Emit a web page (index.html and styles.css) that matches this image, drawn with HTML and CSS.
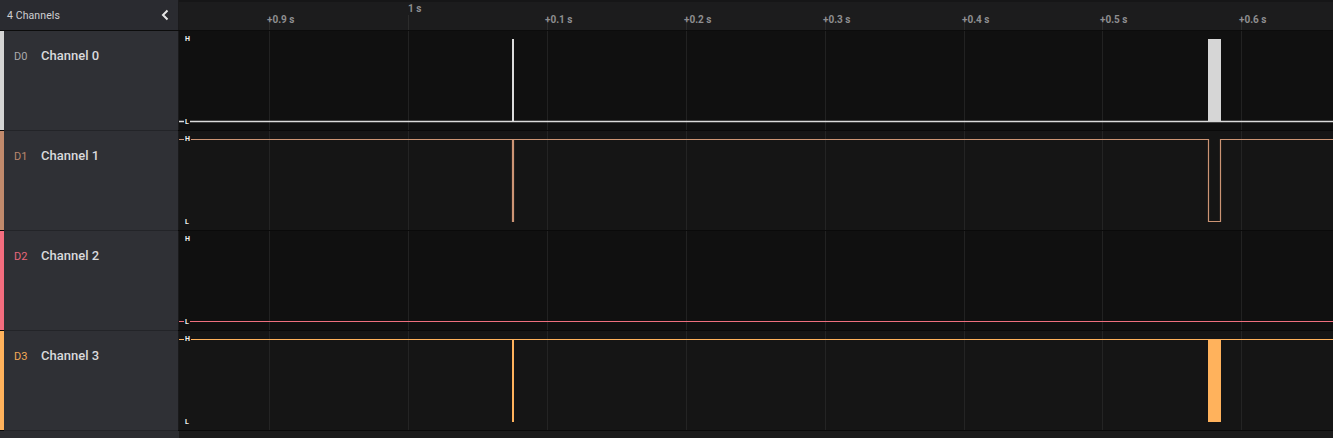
FILE: index.html
```html
<!DOCTYPE html>
<html>
<head>
<meta charset="utf-8">
<link rel="stylesheet" href="styles.css">
</head>
<body>
<div class="app">
  <div class="header">
    <div class="hdr-left">
      <span class="hdr-title">4 Channels</span>
      <svg class="chev" width="8" height="12" viewBox="0 0 8 12"><polyline points="6.5,1.5 2,6 6.5,10.5" fill="none" stroke="#e6e6e6" stroke-width="2"/></svg>
    </div>
    <div class="ruler">
      <svg class="ruler-svg" width="1154" height="30" viewBox="0 0 1154 30">
        <g stroke="#2c2c2c" stroke-width="1">
          <line x1="90.5" y1="16" x2="90.5" y2="30"/>
          <line x1="229.5" y1="15" x2="229.5" y2="30"/>
          <line x1="368.5" y1="16" x2="368.5" y2="30"/>
          <line x1="507.5" y1="16" x2="507.5" y2="30"/>
          <line x1="646.5" y1="16" x2="646.5" y2="30"/>
          <line x1="785.5" y1="16" x2="785.5" y2="30"/>
          <line x1="923.5" y1="16" x2="923.5" y2="30"/>
          <line x1="1062.5" y1="16" x2="1062.5" y2="30"/>
        </g>
      </svg>
      <span class="tick" style="left:88px">+0.9 s</span>
      <span class="tick major" style="left:229px">1 s</span>
      <span class="tick" style="left:366px">+0.1 s</span>
      <span class="tick" style="left:505px">+0.2 s</span>
      <span class="tick" style="left:644px">+0.3 s</span>
      <span class="tick" style="left:783px">+0.4 s</span>
      <span class="tick" style="left:921px">+0.5 s</span>
      <span class="tick" style="left:1060px">+0.6 s</span>
    </div>
  </div>

  <div class="row">
    <div class="chan c0"><span class="dn">D0</span><span class="cn">Channel 0</span></div>
    <div class="plot dark">
      <svg width="1154" height="99" viewBox="0 0 1154 99">
        <g stroke="#222" stroke-width="1">
          <line x1="90.5" y1="0" x2="90.5" y2="99"/><line x1="229.5" y1="0" x2="229.5" y2="99"/><line x1="368.5" y1="0" x2="368.5" y2="99"/><line x1="507.5" y1="0" x2="507.5" y2="99"/><line x1="646.5" y1="0" x2="646.5" y2="99"/><line x1="785.5" y1="0" x2="785.5" y2="99"/><line x1="923.5" y1="0" x2="923.5" y2="99"/><line x1="1062.5" y1="0" x2="1062.5" y2="99"/>
        </g>
        <line x1="0" y1="90.5" x2="1154" y2="90.5" stroke="#dcdcdc" stroke-width="1.5"/>
        <rect x="333" y="8" width="2" height="83" fill="#dcdcdc"/>
        <rect x="1029" y="8" width="13" height="83" fill="#d6d6d6"/>
      </svg>
      <span class="lvl lh">H</span><span class="lvl ll">L</span>
    </div>
  </div>

  <div class="row">
    <div class="chan c1"><span class="dn">D1</span><span class="cn">Channel 1</span></div>
    <div class="plot light">
      <svg width="1154" height="99" viewBox="0 0 1154 99">
        <g stroke="#242424" stroke-width="1">
          <line x1="90.5" y1="0" x2="90.5" y2="99"/><line x1="229.5" y1="0" x2="229.5" y2="99"/><line x1="368.5" y1="0" x2="368.5" y2="99"/><line x1="507.5" y1="0" x2="507.5" y2="99"/><line x1="646.5" y1="0" x2="646.5" y2="99"/><line x1="785.5" y1="0" x2="785.5" y2="99"/><line x1="923.5" y1="0" x2="923.5" y2="99"/><line x1="1062.5" y1="0" x2="1062.5" y2="99"/>
        </g>
        <path d="M0 8.5 H333.5 V90.5 H334.5 V8.5 H1029.5 V90.5 H1041.5 V8.5 H1154" fill="none" stroke="#cc9474" stroke-width="1.2"/>
      </svg>
      <span class="lvl lh">H</span><span class="lvl ll">L</span>
    </div>
  </div>

  <div class="row">
    <div class="chan c2"><span class="dn">D2</span><span class="cn">Channel 2</span></div>
    <div class="plot dark">
      <svg width="1154" height="99" viewBox="0 0 1154 99">
        <g stroke="#222" stroke-width="1">
          <line x1="90.5" y1="0" x2="90.5" y2="99"/><line x1="229.5" y1="0" x2="229.5" y2="99"/><line x1="368.5" y1="0" x2="368.5" y2="99"/><line x1="507.5" y1="0" x2="507.5" y2="99"/><line x1="646.5" y1="0" x2="646.5" y2="99"/><line x1="785.5" y1="0" x2="785.5" y2="99"/><line x1="923.5" y1="0" x2="923.5" y2="99"/><line x1="1062.5" y1="0" x2="1062.5" y2="99"/>
        </g>
        <line x1="0" y1="90.5" x2="1154" y2="90.5" stroke="#f0707f" stroke-width="1.2"/>
      </svg>
      <span class="lvl lh">H</span><span class="lvl ll">L</span>
    </div>
  </div>

  <div class="row">
    <div class="chan c3"><span class="dn">D3</span><span class="cn">Channel 3</span></div>
    <div class="plot light">
      <svg width="1154" height="99" viewBox="0 0 1154 99">
        <g stroke="#242424" stroke-width="1">
          <line x1="90.5" y1="0" x2="90.5" y2="99"/><line x1="229.5" y1="0" x2="229.5" y2="99"/><line x1="368.5" y1="0" x2="368.5" y2="99"/><line x1="507.5" y1="0" x2="507.5" y2="99"/><line x1="646.5" y1="0" x2="646.5" y2="99"/><line x1="785.5" y1="0" x2="785.5" y2="99"/><line x1="923.5" y1="0" x2="923.5" y2="99"/><line x1="1062.5" y1="0" x2="1062.5" y2="99"/>
        </g>
        <line x1="0" y1="8.5" x2="1154" y2="8.5" stroke="#ffb25c" stroke-width="1.2"/>
        <rect x="333" y="8" width="2" height="83" fill="#ffb25c"/>
        <rect x="1029" y="8" width="13" height="83" fill="#ffb25c"/>
      </svg>
      <span class="lvl lh">H</span><span class="lvl ll">L</span>
    </div>
  </div>

  <div class="footer">
    <div class="foot-left"></div>
    <div class="foot-right"></div>
  </div>
</div>
</body>
</html>
```

FILE: styles.css
```css
* { box-sizing: border-box; }
html, body {
  margin: 0;
  padding: 0;
  background: #111;
  overflow: hidden;
  font-family: Roboto, "Liberation Sans", sans-serif;
}
.app {
  width: 1333px;
  height: 438px;
  display: flex;
  flex-direction: column;
}
.header {
  height: 31px;
  display: flex;
  border-bottom: 1px solid #0c0c0c;
  flex-shrink: 0;
}
.hdr-left {
  width: 179px;
  background: #2a2b30;
  display: flex;
  align-items: center;
  justify-content: space-between;
  padding: 0 9px 0 7px;
  border-right: 1px solid #1a1a1c;
}
.hdr-title {
  font-size: 10.5px;
  color: #cfcfd2;
  letter-spacing: 0.1px;
}
.chev { display: block; }
.ruler {
  flex: 1;
  position: relative;
  background: #1c1c1d;
  border-top: 2px solid #161617;
}
.ruler-svg {
  position: absolute;
  left: 0;
  top: -2px;
}
.tick {
  position: absolute;
  top: 12px;
  font-size: 10px;
  font-weight: 700;
  color: #8e8e90;
  white-space: nowrap;
  line-height: 12px;
}
.tick.major { top: 1px; }
.row {
  height: 100px;
  display: flex;
  border-bottom: 1px solid #0a0a0a;
  flex-shrink: 0;
}
.chan {
  width: 179px;
  background: #2f3035;
  border-left: 4px solid #d4d4d4;
  border-right: 1px solid #1a1a1c;
  display: flex;
  align-items: flex-start;
  padding: 17px 0 0 10px;
  gap: 14px;
  position: relative;
}
.chan::after {
  content: "";
  position: absolute;
  left: 0;
  right: 0;
  bottom: -1px;
  height: 1px;
  background: #232428;
}
.c0 { border-left-color: #d4d4d4; }
.c1 { border-left-color: #c18a6c; }
.c2 { border-left-color: #f46d7f; }
.c3 { border-left-color: #ffb25c; }
.dn {
  font-size: 11px;
  line-height: 16px;
  padding-top: 1px;
  width: 13px;
}
.c0 .dn { color: #a9a9ab; }
.c1 .dn { color: #b9876d; }
.c2 .dn { color: #e8677a; }
.c3 .dn { color: #f2a955; }
.cn {
  font-size: 13px;
  font-weight: 500;
  line-height: 16px;
  color: #d9d9dc;
}
.plot {
  flex: 1;
  position: relative;
  overflow: hidden;
}
.plot svg { display: block; }
.plot.dark { background: #101010; }
.plot.light { background: #151515; }
.lvl {
  position: absolute;
  left: 5px;
  font-size: 7px;
  font-weight: 700;
  line-height: 8px;
  color: #f2f2f2;
  padding: 0 1px;
}
.dark .lvl { background: #101010; }
.light .lvl { background: #151515; }
.lh { top: 4px; }
.ll { top: 87px; }
.footer {
  flex: 1;
  display: flex;
}
.foot-left {
  width: 179px;
  background: #2c2d31;
}
.foot-right {
  flex: 1;
  background: #1b1b1b;
}
```
